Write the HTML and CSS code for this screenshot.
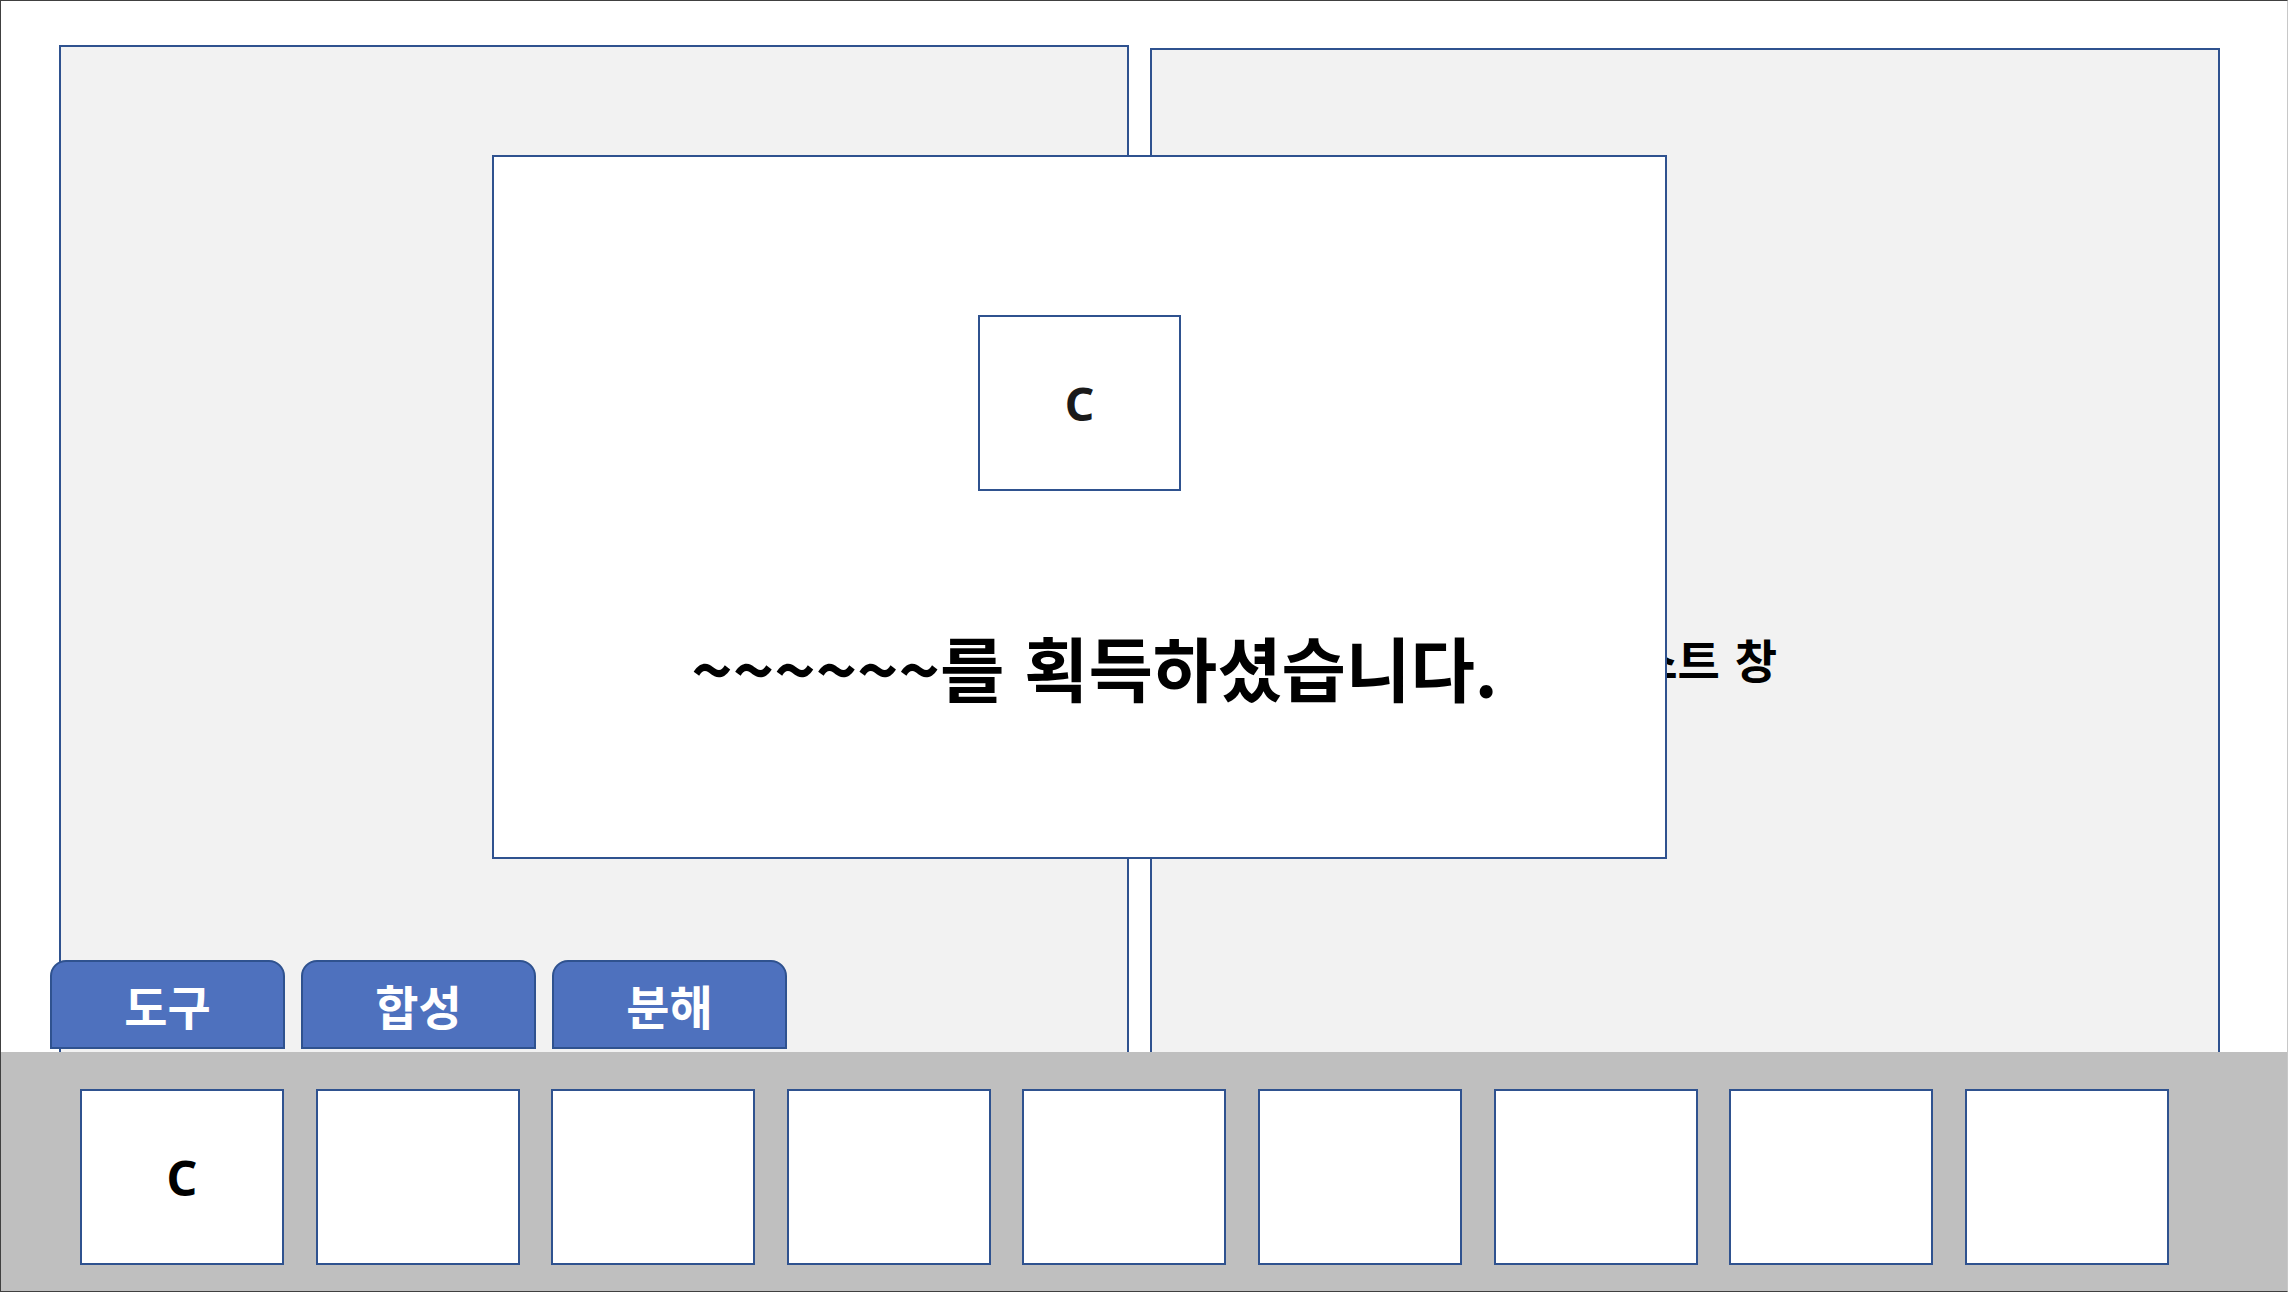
FILE: index.html
```html
<!DOCTYPE html>
<html lang="ko">
    <head>
        <meta charset="UTF-8">
        <meta name="viewport" content="width=device-width, initial-scale=1.0">
        <title>획득 알림</title>
        <link rel="stylesheet" href="styles.css">
    </head>
    <body>
        <div class="screen">
            <div class="workspace">
                <div class="panel panel-left"></div>
                <div class="panel panel-right">
                    <span class="panel-title">퀘스트 창</span>
                </div>
            </div>

            <div class="popup">
                <div class="item-box">C</div>
                <p class="popup-message">~~~~~~를 획득하셨습니다.</p>
            </div>

            <div class="dock">
                <div class="tabs">
                    <button class="tab">도구</button>
                    <button class="tab">합성</button>
                    <button class="tab">분해</button>
                </div>
                <div class="slot-bar">
                    <div class="slot">C</div>
                    <div class="slot"></div>
                    <div class="slot"></div>
                    <div class="slot"></div>
                    <div class="slot"></div>
                    <div class="slot"></div>
                    <div class="slot"></div>
                    <div class="slot"></div>
                    <div class="slot"></div>
                </div>
            </div>
        </div>
    </body>
</html>
```

FILE: styles.css
```css
* {
    box-sizing: border-box;
}

body {
    margin: 0;
    font-family: "Noto Sans CJK KR", "Noto Sans", sans-serif;
    background-color: #ffffff;
}

.screen {
    position: relative;
    width: 2288px;
    height: 1292px;
    overflow: hidden;
    border: 1px solid #404040;
    border-right-color: #c8c8c8;
    background-color: #ffffff;
}

.workspace {
    display: flex;
    align-items: flex-start;
    gap: 21px;
    padding: 44px 0 0 58px;
}

.panel {
    width: 1070px;
    height: 1228px;
    background-color: #f2f2f2;
    border: 2px solid #2f528f;
}

.panel-right {
    margin-top: 3px;
    display: flex;
    align-items: center;
    justify-content: center;
    padding-bottom: 8px;
}

.panel-title {
    font-size: 46px;
    font-weight: 700;
    color: #000000;
    word-spacing: 2px;
}

.popup {
    position: absolute;
    left: 491px;
    top: 154px;
    width: 1175px;
    height: 704px;
    display: flex;
    flex-direction: column;
    align-items: center;
    padding-top: 158px;
    background-color: #ffffff;
    border: 2px solid #2f528f;
}

.item-box {
    width: 203px;
    height: 176px;
    display: flex;
    align-items: center;
    justify-content: center;
    border: 2px solid #2f528f;
    font-family: "Noto Sans", sans-serif;
    font-size: 46px;
    font-weight: 700;
    color: #1a1a1a;
}

.popup-message {
    margin: 134px 0 0 30px;
    font-size: 70px;
    line-height: 84px;
    font-weight: 700;
    color: #000000;
}

.dock {
    position: absolute;
    left: 0;
    right: 0;
    bottom: 0;
}

.tabs {
    display: flex;
    gap: 16px;
    padding-left: 49px;
    margin-bottom: 3px;
}

.tab {
    width: 235px;
    height: 89px;
    padding: 0;
    background-color: #4e71be;
    border: 2px solid #2f528f;
    border-radius: 16px 16px 0 0;
    font-family: "Noto Sans CJK KR", sans-serif;
    font-size: 47px;
    font-weight: 700;
    color: #ffffff;
    cursor: pointer;
}

.slot-bar {
    display: flex;
    gap: 31.6px;
    height: 239px;
    padding: 37px 0 0 79px;
    background-color: #bfbfbf;
}

.slot {
    width: 204px;
    height: 176px;
    display: flex;
    align-items: center;
    justify-content: center;
    background-color: #ffffff;
    border: 2px solid #2f528f;
    font-family: "Noto Sans", sans-serif;
    font-size: 48px;
    font-weight: 700;
    color: #000000;
}
```
